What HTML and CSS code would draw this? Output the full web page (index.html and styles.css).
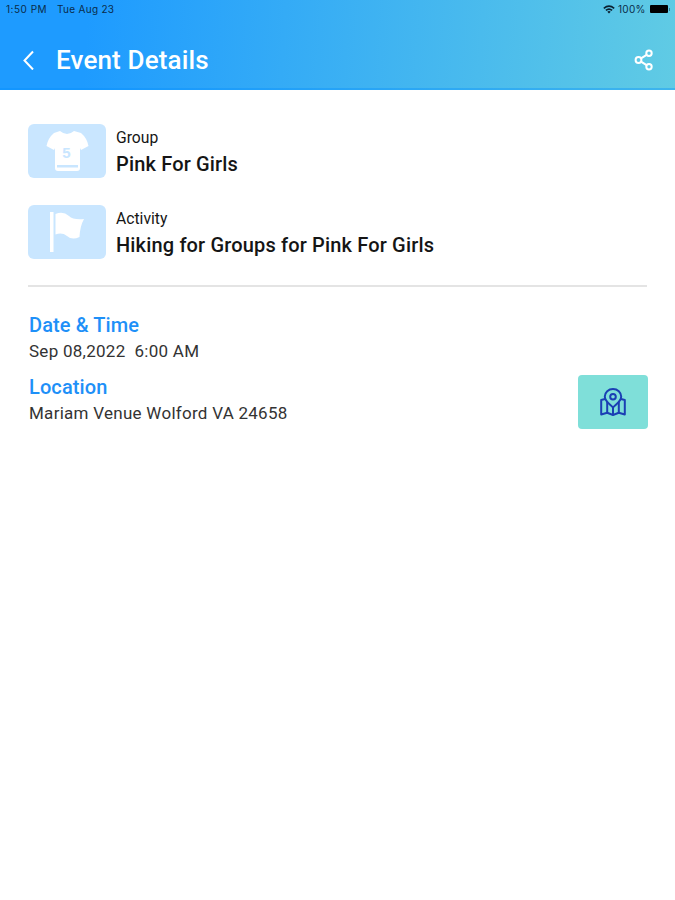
FILE: index.html
```
<!DOCTYPE html>
<html lang="en">
<head>
  <meta charset="UTF-8" />
  <title>Event Details</title>
  <link rel="stylesheet" href="styles.css">
</head>
<body>
  <div class="header">
    <div class="status-bar">
      <span class="time">1:50 PM</span>
      <span class="date">Tue Aug 23</span>
      <div class="status-right">
        <svg class="wifi" viewBox="0 0 12 9" fill="none" stroke="#0a2030" stroke-width="1.6">
          <path d="M0.8 3.4 Q6 -1 11.2 3.4" />
          <path d="M2.9 5.4 Q6 2.7 9.1 5.4" />
          <path d="M4.3 6.8 Q6 5.4 7.7 6.8 L6 8.6 Z" fill="#0a2030" stroke="none" />
        </svg>
        <span class="percent">100%</span>
        <div class="battery"></div>
        <div class="battery-tip"></div>
      </div>
    </div>
    <div class="navbar">
      <svg class="back" viewBox="0 0 12 20" fill="none" stroke="#fff" stroke-width="2">
        <path d="M11 1.5 L2.5 10.5 L11 19.5" />
      </svg>
      <h1>Event Details</h1>
      <svg class="share" viewBox="0 0 20 22" fill="none" stroke="#fff" stroke-width="2">
        <circle cx="4.5" cy="11" r="2.9" />
        <circle cx="15" cy="4.2" r="2.7" />
        <circle cx="15" cy="17.8" r="2.7" />
        <path d="M7 9.4 L12.6 5.8 M7 12.6 L12.6 16.2" />
      </svg>
    </div>
  </div>

  <div class="content">
    <div class="info-row">
      <div class="thumb">
        <svg viewBox="0 0 78 54">
          <path d="M32 7 Q39 13 46 7 L53 9 Q59 14 60.5 22 L53 26 L52 24 V44 Q52 47 49 47 H30 Q27 47 27 44 V24 L26 26 L18.5 22 Q20 14 26 9 Z" fill="#fff" />
          <rect x="29" y="41" width="21" height="2.5" fill="#c9e6ff" />
          <text x="38.5" y="34" class="shirt-number">5</text>
        </svg>
      </div>
      <div class="info-text">
        <span class="label">Group</span>
        <b>Pink For Girls</b>
      </div>
    </div>

    <div class="info-row">
      <div class="thumb">
        <svg viewBox="0 0 78 54" fill="#fff">
          <rect x="22" y="7" width="3.5" height="40" />
          <path d="M27.5 9 Q35 5.5 41 11 Q45 15 56 14 Q52 21 51.5 32 Q44 35.5 39 31 Q34 27 27.5 29.5 Z" />
        </svg>
      </div>
      <div class="info-text">
        <span class="label">Activity</span>
        <b>Hiking for Groups for Pink For Girls</b>
      </div>
    </div>

    <hr>

    <div class="detail">
      <h2>Date &amp; Time</h2>
      <p>Sep 08,2022&nbsp; 6:00 AM</p>
    </div>

    <div class="detail location">
      <div>
        <h2>Location</h2>
        <p>Mariam Venue Wolford VA 24658</p>
      </div>
      <div class="map-btn">
        <svg viewBox="0 0 26 28" fill="none" stroke="#1b3fb4" stroke-width="2" stroke-linejoin="round">
          <path d="M5 11 L1.2 12 V26.5 L7.2 24.8 L13 27 L18.8 24.8 L24.8 26.5 V12 L21 11" />
          <path d="M7.2 14 V24.8 M18.8 14 V24.8 M13 19.5 V27" />
          <path d="M13 19.5 C9.5 16 4.8 13.5 4.8 8.6 A8.2 7.6 0 0 1 21.2 8.6 C21.2 13.5 16.5 16 13 19.5 Z" />
          <circle cx="13" cy="8.8" r="2.8" />
        </svg>
      </div>
    </div>
  </div>
</body>
</html>
```

FILE: styles.css
```
body {
  margin: 0;
  background-color: #fff;
  color: #151515;
  font-family: Roboto, "Liberation Sans", sans-serif;
}

.header {
  height: 90px;
  background: linear-gradient(94deg, #1e9bff 0%, #1e9bff 13%, #60cbe4 100%);
  box-shadow: inset 0 -2px 0 rgba(0, 140, 255, 0.35);
}

.status-bar {
  display: flex;
  align-items: center;
  height: 18px;
  padding: 0 5px 0 6px;
  color: #0a2c4a;
  font-family: Inter, sans-serif;
  font-size: 10px;
  letter-spacing: 0.3px;
  white-space: nowrap;
}

.time {
  width: 51px;
  letter-spacing: 0.5px;
}

.status-right {
  display: flex;
  align-items: center;
  margin-left: auto;
}

.wifi {
  width: 12px;
  height: 9px;
  margin-right: 3px;
}

.percent {
  width: 32px;
}

.battery {
  width: 18px;
  height: 8px;
  background-color: #000;
  border-radius: 1px;
}

.battery-tip {
  width: 1px;
  height: 3px;
  margin-left: 1px;
  background-color: #3a7f95;
}

.navbar {
  display: flex;
  align-items: center;
  height: 84px;
  padding: 0 21px 0 22px;
  box-sizing: border-box;
}

.back {
  width: 12px;
  height: 20px;
}

.navbar h1 {
  margin: 0 0 0 22px;
  color: #fff;
  font-size: 26px;
  font-weight: 500;
  letter-spacing: 0.15px;
}

.share {
  width: 20px;
  height: 22px;
  margin-left: auto;
}

.content {
  padding: 34px 28px 0;
}

.info-row {
  display: flex;
  height: 54px;
  margin-bottom: 27px;
}

.thumb {
  width: 78px;
  height: 54px;
  background-color: #c9e6ff;
  border-radius: 6px;
}

.thumb svg {
  display: block;
}

.shirt-number {
  fill: #c9e6ff;
  font-family: "Liberation Sans", sans-serif;
  font-size: 15px;
  font-weight: bold;
  text-anchor: middle;
}

.info-text {
  margin-left: 10px;
  white-space: nowrap;
}

.label {
  display: block;
  height: 27px;
  font-size: 15.7px;
  line-height: 27px;
}

.info-text b {
  display: block;
  font-size: 20px;
  font-weight: 500;
  letter-spacing: 0.16px;
  line-height: 26px;
}

hr {
  height: 2px;
  margin: -1px 0 0;
  border: none;
  background-color: #e4e4e4;
}

.detail {
  margin-top: 25px;
  padding-left: 1px;
}

.detail h2 {
  margin: 0;
  color: #1e90f8;
  font-size: 20px;
  font-weight: 500;
  letter-spacing: 0.1px;
  line-height: 26px;
}

.detail p {
  margin: 0;
  color: #333;
  font-size: 17px;
  letter-spacing: 0.27px;
  line-height: 26px;
}

.location {
  display: flex;
  justify-content: space-between;
  margin-top: 10px;
}

.map-btn {
  display: flex;
  align-items: center;
  justify-content: center;
  width: 70px;
  height: 54px;
  margin: 1px -1px 0 0;
  background-color: #7fdfd9;
  border-radius: 4px;
}

.map-btn svg {
  width: 26px;
  height: 28px;
}
```
